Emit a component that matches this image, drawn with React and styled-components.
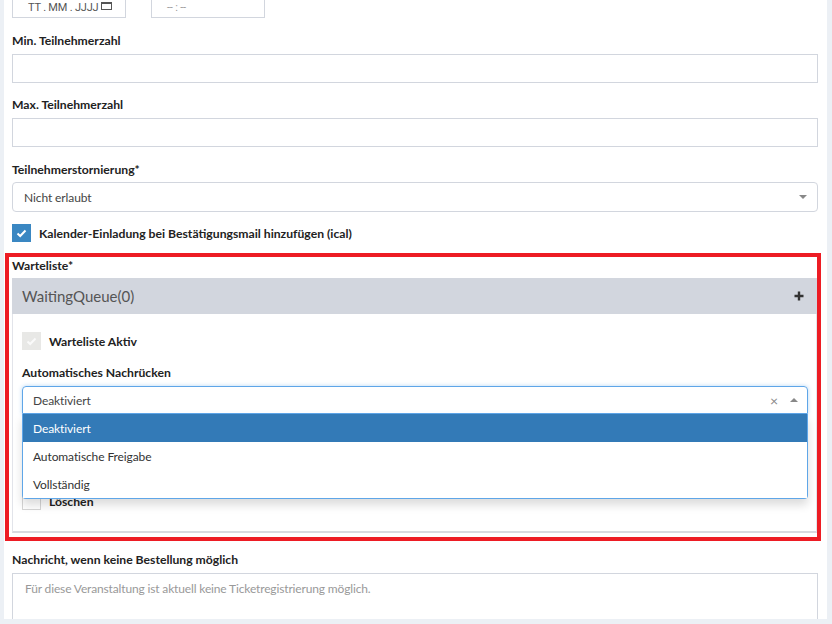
import React from 'react';
import styled, { createGlobalStyle } from 'styled-components';

const Global = createGlobalStyle`
  html, body { margin: 0; padding: 0; background: #ecf0f5; }
  body { font-family: Lato, "Noto Sans", sans-serif; color: #333; }
  * { box-sizing: border-box; }
`;

const Viewport = styled.div`
  width: 832px;
  height: 624px;
  overflow: hidden;
  background: #ecf0f5;
`;

const Content = styled.div`
  margin-left: 4px;
  width: 823px;
  height: 619px;
  background: #fff;
  overflow: hidden;
  padding: 0 9px 0 8px;
`;

const Scroller = styled.div`
  margin-top: -12px;
  display: flex;
  flex-direction: column;
`;

const DateRow = styled.div`
  display: flex;
  gap: 25px;
  margin-bottom: 14px;
`;

const DateInput = styled.div`
  width: 114px;
  height: 30px;
  border: 1px solid #d2d6de;
  display: flex;
  align-items: center;
  padding: 8px 0 0 15px;
  font-family: Roboto, "Liberation Sans", sans-serif;
  font-size: 11px;
  letter-spacing: -0.2px;
  color: ${p => (p.$muted ? '#9a9a9a' : '#555')};
  gap: 3px;
`;

const CalIcon = styled.span`
  display: inline-block;
  width: 11px;
  height: 8px;
  border: 1px solid #555;
  border-top-width: 2px;
  margin-top: -3px;
`;

const Group = styled.div`
  display: flex;
  flex-direction: column;
  margin-bottom: ${p => p.$mb ?? 14}px;
`;

const Label = styled.label`
  display: block;
  font-size: 12.2px;
  font-weight: 700;
  line-height: 18px;
  color: #222;
  margin-bottom: ${p => p.$mb ?? 4}px;
`;

const TextInput = styled.div`
  height: ${p => p.$h ?? 29}px;
  border: 1px solid #d2d6de;
  background: #fff;
`;

const Select = styled.div`
  height: 30px;
  border: 1px solid #d2d6de;
  border-radius: 4px;
  display: flex;
  align-items: center;
  justify-content: space-between;
  padding: 0 10px 0 11px;
  font-size: 12px;
  letter-spacing: -0.1px;
  color: #444;
`;

const Caret = styled.span`
  width: 0;
  height: 0;
  border-left: 4px solid transparent;
  border-right: 4px solid transparent;
  ${p =>
    p.$up
      ? 'border-bottom: 4px solid #888;'
      : 'border-top: 4px solid #888;'}
`;

const CheckRow = styled.div`
  display: flex;
  align-items: center;
  gap: 8px;
  height: 18px;
  margin-top: ${p => p.$mt ?? 0}px;
  margin-bottom: ${p => p.$mb ?? 0}px;
  font-size: 12.2px;
  font-weight: 700;
  color: #222;
`;

const Box = styled.span`
  width: 19px;
  height: 18px;
  flex: none;
  display: flex;
  align-items: center;
  justify-content: center;
  background: ${p => p.$bg};
  border: ${p => (p.$border ? '1px solid #d6d6d6' : 'none')};
`;

const RedFrame = styled.div`
  margin: 0 -3px 10px -7px;
  border: 4px solid #ed1c24;
  padding: 0 0 4px 3px;
  display: flex;
  flex-direction: column;
`;

const Panel = styled.div`
  display: flex;
  flex-direction: column;
`;

const PanelHeader = styled.div`
  height: 36px;
  background: #d2d6de;
  display: flex;
  align-items: center;
  justify-content: space-between;
  padding: 0 13px 0 10px;
  font-size: 15px;
  color: #555;
`;

const PanelBody = styled.div`
  border: 1px solid #e2e4ea;
  border-top: none;
  border-bottom: 2px solid #d8dae0;
  padding: 18px 8px 21px 9px;
  display: flex;
  flex-direction: column;
`;

const SelectWrap = styled.div`
  position: relative;
`;

const OpenSelect = styled.div`
  height: 28px;
  border: 1px solid #5fa6e8;
  border-radius: 4px 4px 0 0;
  box-shadow: 0 0 4px rgba(95, 166, 232, 0.45);
  display: flex;
  align-items: center;
  justify-content: space-between;
  padding: 0 9px 0 10px;
  font-size: 12px;
  letter-spacing: -0.1px;
  color: #444;
`;

const SelectIcons = styled.div`
  display: flex;
  align-items: center;
  gap: 12px;
  color: #888;
  font-size: 14px;
`;

const Menu = styled.div`
  position: absolute;
  top: 100%;
  left: 0;
  right: 0;
  background: #fff;
  border: 1px solid #5fa6e8;
  border-top: none;
  border-radius: 0 0 4px 4px;
  box-shadow: 0 6px 10px rgba(0, 0, 0, 0.14);
  z-index: 5;
`;

const Option = styled.div`
  height: 28px;
  display: flex;
  align-items: center;
  padding-left: 10px;
  font-size: 12px;
  letter-spacing: -0.1px;
  background: ${p => (p.$active ? '#337ab7' : '#fff')};
  color: ${p => (p.$active ? '#fff' : '#333')};
`;

const TextArea = styled.div`
  height: 70px;
  border: 1px solid #d2d6de;
  padding: 6px 12px;
  font-size: 12px;
  letter-spacing: -0.15px;
  line-height: 18px;
  color: #999;
`;

const Check = ({ color }) => (
  <svg width="11" height="9" viewBox="0 0 11 9">
    <path d="M1.5 4.5 L4.2 7 L9.5 1.5" fill="none" stroke={color} strokeWidth="2" />
  </svg>
);

const Plus = () => (
  <svg width="10" height="10" viewBox="0 0 10 10">
    <path d="M5 0.5 V9.5 M0.5 5 H9.5" stroke="#333" strokeWidth="2.4" />
  </svg>
);

export default function App() {
  return (
    <Viewport>
      <Global />
      <Content>
        <Scroller>
          <DateRow>
            <DateInput>
              TT . MM . JJJJ <CalIcon />
            </DateInput>
            <DateInput $muted>-- : --</DateInput>
          </DateRow>

          <Group $mb={13}>
            <Label>Min. Teilnehmerzahl</Label>
            <TextInput />
          </Group>

          <Group>
            <Label>Max. Teilnehmerzahl</Label>
            <TextInput />
          </Group>

          <Group $mb={12}>
            <Label $mb={3}>Teilnehmerstornierung*</Label>
            <Select>
              <span>Nicht erlaubt</span>
              <Caret />
            </Select>
          </Group>

          <CheckRow $mb={11}>
            <Box $bg="#3a87c2">
              <Check color="#fff" />
            </Box>
            Kalender-Einladung bei Bestätigungsmail hinzufügen (ical)
          </CheckRow>

          <RedFrame>
            <Label $mb={3}>Warteliste*</Label>
            <Panel>
              <PanelHeader>
                <span>WaitingQueue(0)</span>
                <Plus />
              </PanelHeader>
              <PanelBody>
                <CheckRow $mb={14}>
                  <Box $bg="#e8e8e6">
                    <Check color="#fafafa" />
                  </Box>
                  Warteliste Aktiv
                </CheckRow>
                <Label>Automatisches Nachrücken</Label>
                <SelectWrap>
                  <OpenSelect>
                    <span>Deaktiviert</span>
                    <SelectIcons>
                      <span>×</span>
                      <Caret $up />
                    </SelectIcons>
                  </OpenSelect>
                  <Menu>
                    <Option $active>Deaktiviert</Option>
                    <Option>Automatische Freigabe</Option>
                    <Option>Vollständig</Option>
                  </Menu>
                </SelectWrap>
                <CheckRow $mt={78}>
                  <Box $bg="#fff" $border />
                  Löschen
                </CheckRow>
              </PanelBody>
            </Panel>
          </RedFrame>

          <Group>
            <Label>Nachricht, wenn keine Bestellung möglich</Label>
            <TextArea>Für diese Veranstaltung ist aktuell keine Ticketregistrierung möglich.</TextArea>
          </Group>
        </Scroller>
      </Content>
    </Viewport>
  );
}
